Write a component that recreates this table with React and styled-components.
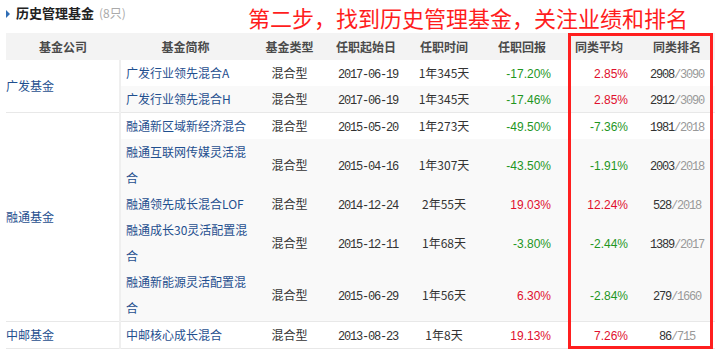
import React from 'react'
import styled, { createGlobalStyle } from 'styled-components'

const GlobalStyle = createGlobalStyle`
  html, body { margin: 0; padding: 0; background: #fff; }
  body { font-family: "Noto Sans CJK SC", "Liberation Sans", sans-serif; font-size: 12px; color: #333; }
`

const Page = styled.div`
  width: 725px; height: 354px; overflow: hidden; position: relative;
  padding-left: 6px; box-sizing: border-box;
`
const TitleBar = styled.div`
  display: flex; align-items: flex-start; height: 33px;
`
const Marker = styled.span`
  width: 0; height: 0; margin: 10px 6px 0 0;
  border-top: 4px solid transparent; border-bottom: 4px solid transparent;
  border-left: 4px solid #2f6db5;
`
const Title = styled.h3`
  margin: 3px 0 0; font-size: 13px; font-weight: bold; color: #222; line-height: 20px;
`
const Count = styled.span`
  margin: 3px 0 0 5px; font-size: 12px; color: #aaa; line-height: 20px;
`
const Note = styled.div`
  margin: 4px 37px 0 auto; font-size: 22px; line-height: 26px; color: #ff1d1d;
  font-family: "Noto Sans CJK SC", sans-serif; white-space: nowrap;
`
const TableWrap = styled.div`
  position: relative; width: 709px;
`
const Table = styled.table`
  width: 709px; table-layout: fixed; border-collapse: collapse;
`
const HeadCell = styled.th`
  height: 27px; padding: 0 ${p => p.$pr || 0}px 0 ${p => p.$pl || 0}px; background: #f3f3f3;
  font-size: 12px; font-weight: bold; color: #4a4a4a; text-align: ${p => p.$align || 'center'};
`
const Row = styled.tr`
  background: ${p => (p.$shade ? '#f9f9f9' : '#fff')};
  border-bottom: ${p => (p.$end ? '1px solid #e8e8e8' : 'none')};
`
const CompanyCell = styled.td`
  background: #fff; border-right: 2px solid #efefef; padding: 0;
  color: #1f4f8f; line-height: 26px; vertical-align: middle;
`
const NameCell = styled.td`
  padding: 0 5px; color: #1f4f8f; line-height: 26px; word-break: break-all;
`
const Cell = styled.td`
  padding: 0 ${p => p.$pr || 0}px 0 ${p => p.$pl || 0}px; line-height: 26px;
  text-align: ${p => p.$align || 'center'}; color: #333;
`
const Mono = styled.span`
  font-family: "Liberation Mono", monospace; font-size: 12px; letter-spacing: -1.2px;
  line-height: 1; color: #333;
`
const Total = styled(Mono)`
  color: #999;
`
const Pct = styled.span`
  font-family: "Liberation Sans", Arial, sans-serif; font-size: 12px; line-height: 1;
  color: ${p => (p.$up ? '#e0102e' : '#1f961f')};
`
const Highlight = styled.div`
  position: absolute; left: 562px; top: 0; width: 145px; height: 316px;
  border: 3px solid #ff1f1f; box-sizing: border-box; pointer-events: none;
`

const funds = [
  { company: '广发基金', span: 2, name: '广发行业领先混合A', start: '2017-06-19', term: '1年345天', ret: '-17.20%', avg: '2.85%', rank: '2908', of: '3090' },
  { name: '广发行业领先混合H', start: '2017-06-19', term: '1年345天', ret: '-17.46%', avg: '2.85%', rank: '2912', of: '3090', shade: true, end: true },
  { company: '融通基金', span: 5, name: '融通新区域新经济混合', start: '2015-05-20', term: '1年273天', ret: '-49.50%', avg: '-7.36%', rank: '1981', of: '2018' },
  { name: '融通互联网传媒灵活混合', start: '2015-04-16', term: '1年307天', ret: '-43.50%', avg: '-1.91%', rank: '2003', of: '2018', shade: true },
  { name: '融通领先成长混合LOF', start: '2014-12-24', term: '2年55天', ret: '19.03%', avg: '12.24%', rank: '528', of: '2018', shade: true },
  { name: '融通成长30灵活配置混合', start: '2015-12-11', term: '1年68天', ret: '-3.80%', avg: '-2.44%', rank: '1389', of: '2017', shade: true },
  { name: '融通新能源灵活配置混合', start: '2015-06-29', term: '1年56天', ret: '6.30%', avg: '-2.84%', rank: '279', of: '1660', shade: true, end: true },
  { company: '中邮基金', span: 1, name: '中邮核心成长混合', start: '2013-08-23', term: '1年8天', ret: '19.13%', avg: '7.26%', rank: '86', of: '715', end: true },
]

const App = () => {
  return (
    <>
      <GlobalStyle />
      <Page>
        <TitleBar>
          <Marker />
          <Title>历史管理基金</Title>
          <Count>(8只)</Count>
          <Note>第二步，找到历史管理基金，关注业绩和排名</Note>
        </TitleBar>
        <TableWrap>
          <Table>
            <colgroup>
              <col style={{ width: 114 }} />
              <col style={{ width: 135 }} />
              <col style={{ width: 69 }} />
              <col style={{ width: 84 }} />
              <col style={{ width: 72 }} />
              <col style={{ width: 76 }} />
              <col style={{ width: 77 }} />
              <col style={{ width: 82 }} />
            </colgroup>
            <thead>
              <tr>
                <HeadCell>基金公司</HeadCell>
                <HeadCell $pr={4}>基金简称</HeadCell>
                <HeadCell>基金类型</HeadCell>
                <HeadCell>任职起始日</HeadCell>
                <HeadCell>任职时间</HeadCell>
                <HeadCell $align="right" $pr={10}>任职回报</HeadCell>
                <HeadCell $align="right" $pr={10}>同类平均</HeadCell>
                <HeadCell $pl={6}>同类排名</HeadCell>
              </tr>
            </thead>
            <tbody>
              {funds.map(f => (
                <Row key={f.name} $shade={f.shade} $end={f.end}>
                  {f.company && (
                    <CompanyCell rowSpan={f.span}>{f.company}</CompanyCell>
                  )}
                  <NameCell>{f.name}</NameCell>
                  <Cell>混合型</Cell>
                  <Cell $pl={4}><Mono>{f.start}</Mono></Cell>
                  <Cell>{f.term}</Cell>
                  <Cell $align="right" $pr={5}><Pct $up={!f.ret.startsWith('-')}>{f.ret}</Pct></Cell>
                  <Cell $align="right" $pr={5}><Pct $up={!f.avg.startsWith('-')}>{f.avg}</Pct></Cell>
                  <Cell $pl={6}><Mono>{f.rank}</Mono><Total>/{f.of}</Total></Cell>
                </Row>
              ))}
            </tbody>
          </Table>
          <Highlight />
        </TableWrap>
      </Page>
    </>
  )
}

export default App
